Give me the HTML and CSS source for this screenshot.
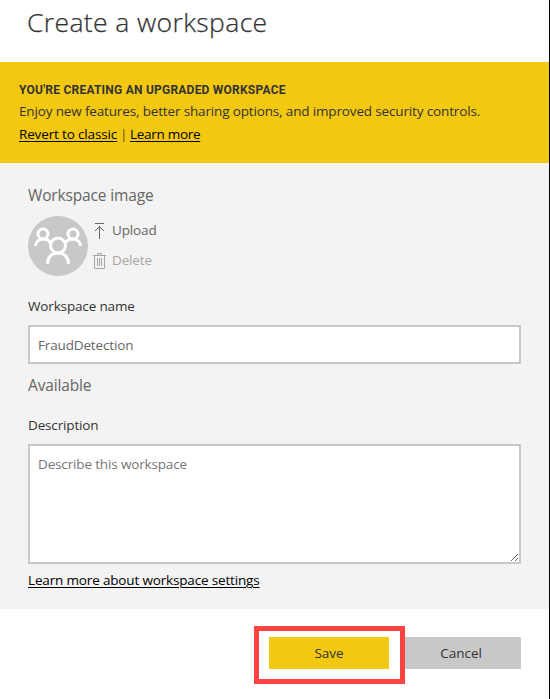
FILE: index.html
```html
<!DOCTYPE html>
<html lang="en">
<head>
<meta charset="utf-8">
<title>Create a workspace</title>
<link rel="stylesheet" href="styles.css">
</head>
<body>
<main class="panel">
  <header class="header"><h1 class="title">Create a workspace</h1></header>
  <section class="banner">
    <h2 class="banner-title">YOU'RE CREATING AN UPGRADED WORKSPACE</h2>
    <p class="banner-text">Enjoy new features, better sharing options, and improved security controls.</p>
    <p class="banner-links"><a class="link" href="#">Revert to classic</a><span class="divider">|</span><a class="link learn" href="#">Learn more</a></p>
  </section>
  <form class="form">
    <div class="heading">Workspace image</div>
    <div class="image-row">
      <svg class="avatar" viewBox="0 0 60 60" fill="none" stroke="#fff" stroke-width="3">
        <circle cx="30" cy="30" r="30" fill="#c8c8c8" stroke="none"/>
        <circle cx="15" cy="18" r="5"/>
        <circle cx="45" cy="18" r="5"/>
        <path d="M7.500 30c0-4 3.200-7 7.500-7s6.500 2 7.500 4M52.500 30c0-4-3.200-7-7.500-7s-6.500 2-7.500 4"/>
        <circle cx="30" cy="29.500" r="7.500"/>
        <path d="M19.500 48c0-7 4.500-11 10.500-11s10.500 4 10.500 11"/>
      </svg>
      <div class="actions">
        <button type="button" class="action">
          <svg class="icon" viewBox="0 0 14 18" fill="none" stroke="#666"><path d="M3 2.500h9M7.500 5v13M3 10l4.500-4.500L12 10"/></svg>
          <span>Upload</span>
        </button>
        <button type="button" class="action disabled">
          <svg class="icon" viewBox="0 0 14 18" fill="none" stroke="#a6a6a6"><path d="M1 4.500h13M5.500 4V2.500h4V4M2.500 5v12.500h10V5M5.500 7v8M7.500 7v8M9.500 7v8"/></svg>
          <span>Delete</span>
        </button>
      </div>
    </div>
    <label class="label" for="name">Workspace name</label>
    <input class="field" id="name" value="FraudDetection">
    <div class="heading status">Available</div>
    <label class="label" for="description">Description</label>
    <textarea class="field area" id="description" placeholder="Describe this workspace"></textarea>
    <a class="link settings" href="#">Learn more about workspace settings</a>
  </form>
  <footer class="footer">
    <button class="button cancel">Cancel</button>
    <div class="save-wrap"><button class="button save">Save</button></div>
  </footer>
</main>
</body>
</html>
```
FILE: styles.css
```css
*, *::after { box-sizing: border-box; }
body { margin: 0; background: #fff; }
.panel {
  width: 550px; height: 699px; overflow: hidden;
  border-right: 1px solid #000;
  font: 13.5px/20px "Open Sans", "Noto Sans", sans-serif;
  letter-spacing: -0.15px;
  color: #333;
}
h1, h2, p { margin: 0; }
.header { height: 62px; padding: 4px 27px; }
.title { font-size: 26.5px; font-weight: 300; line-height: 36px; letter-spacing: 0.38px; -webkit-text-stroke: 0.25px #333; white-space: nowrap; }
.banner { height: 101px; padding: 18px 19px; background: #f2c811; white-space: nowrap; }
.banner-title { font: bold 12px/20px Roboto, sans-serif; letter-spacing: 0.23px; }
.banner-text { line-height: 22px; }
.banner-links { display: flex; line-height: 24px; }
.divider { width: 13px; text-align: center; color: #5e4f10; }
.link { color: #000; text-decoration: underline; text-underline-offset: 2px; text-decoration-thickness: 1px; }
.learn { letter-spacing: -0.3px; }
.form { display: flex; flex-direction: column; height: 446px; padding: 20px 28px 0; background: #f3f3f3; }
.heading { height: 24px; font-size: 15.5px; line-height: 24px; color: #666; white-space: nowrap; }
.image-row { display: flex; gap: 4px; height: 60px; margin-top: 9px; }
.avatar { width: 60px; height: 60px; }
.actions { display: flex; flex-direction: column; margin-top: -1px; }
.action { display: flex; align-items: center; gap: 6px; height: 30px; padding: 0; border: 0; background: none; font: inherit; letter-spacing: inherit; color: #666; }
.icon { width: 14px; height: 18px; overflow: visible; }
.disabled { color: #a6a6a6; }
.label { height: 20px; margin: 20px 0 9px; white-space: nowrap; }
.field { display: block; flex: none; width: 493px; height: 39px; padding: 0 8px; border: 2px solid #c8c8c8; border-radius: 0; background: #fff; font: inherit; letter-spacing: inherit; color: #666; outline: 0; }
.status { margin-top: 9px; }
.status + .label { margin-top: 18px; }
.area { height: 120px; padding-top: 8px; resize: vertical; }
.area::placeholder { color: #767676; opacity: 1; }
.settings { align-self: flex-start; margin-top: 6px; white-space: nowrap; letter-spacing: -0.16px; }
.footer { display: flex; flex-direction: row-reverse; gap: 12px; padding: 28px 28px 0 0; }
.button { width: 120px; height: 32px; padding: 0; border: 0; font: inherit; color: #333; }
.save-wrap { position: relative; width: 120px; height: 32px; }
.save-wrap::after { content: ""; position: absolute; left: -15px; top: -11px; width: 151px; height: 58px; border: 5px solid #ff4343; pointer-events: none; }
.save { background: #f2c811; }
.cancel { background: #c8c8c8; }
```
